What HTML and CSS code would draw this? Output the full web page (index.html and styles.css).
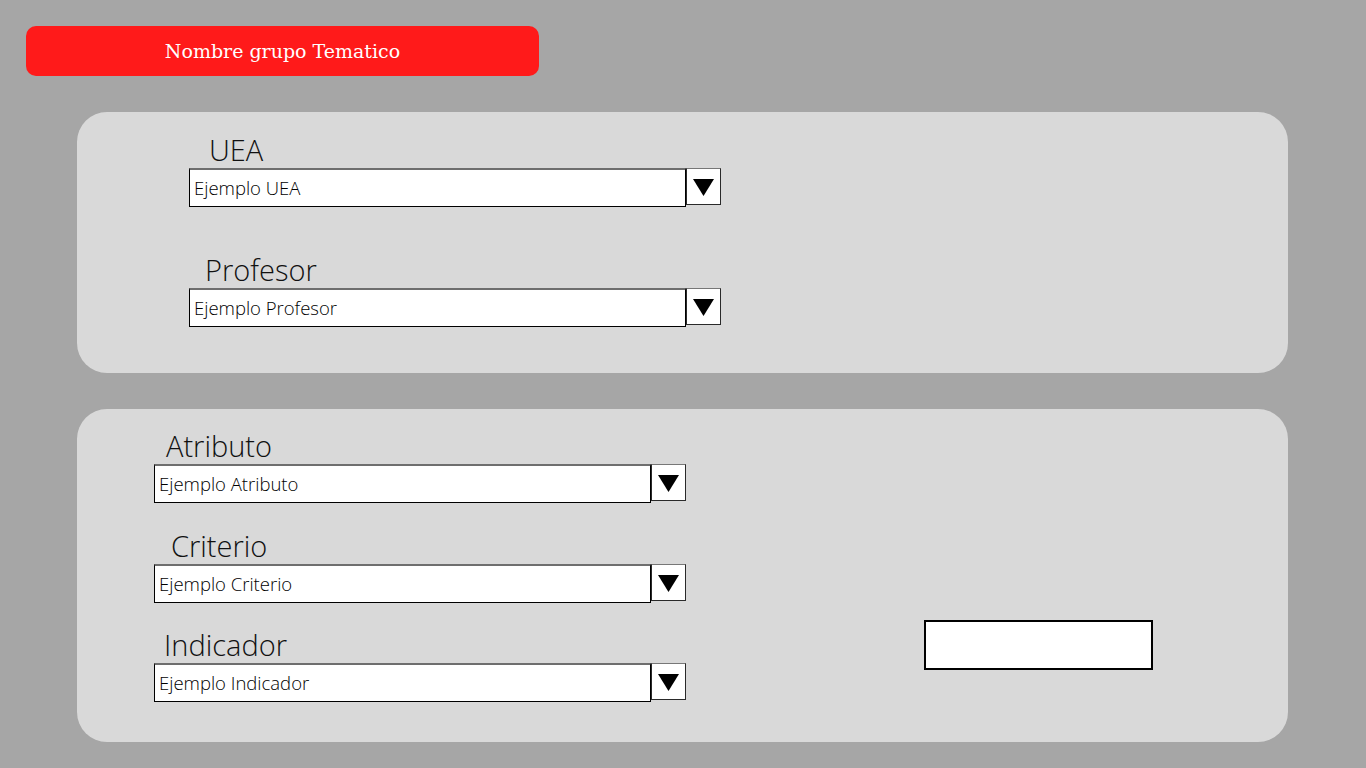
FILE: index.html
```html
<!DOCTYPE html>
<html lang="es">
<head>
<meta charset="utf-8">
<title>Nombre grupo Tematico</title>
<link rel="stylesheet" href="styles.css">
</head>
<body>
<div class="page">
  <div class="header">Nombre grupo Tematico</div>

  <section class="panel panel-top">
    <div class="fields">
      <div class="field">
        <div class="label ind-20">UEA</div>
        <div class="row">
          <div class="input">Ejemplo UEA</div>
          <div class="drop"><svg width="21" height="17" viewBox="0 0 21 17"><polygon points="0,0 21,0 10.5,17" fill="#000"/></svg></div>
        </div>
      </div>
      <div class="field gap-49">
        <div class="label ind-16">Profesor</div>
        <div class="row">
          <div class="input">Ejemplo Profesor</div>
          <div class="drop"><svg width="21" height="17" viewBox="0 0 21 17"><polygon points="0,0 21,0 10.5,17" fill="#000"/></svg></div>
        </div>
      </div>
    </div>
  </section>

  <section class="panel panel-bottom">
    <div class="fields">
      <div class="field">
        <div class="label ind-12">Atributo</div>
        <div class="row">
          <div class="input">Ejemplo Atributo</div>
          <div class="drop"><svg width="21" height="17" viewBox="0 0 21 17"><polygon points="0,0 21,0 10.5,17" fill="#000"/></svg></div>
        </div>
      </div>
      <div class="field gap-29">
        <div class="label ind-17">Criterio</div>
        <div class="row">
          <div class="input">Ejemplo Criterio</div>
          <div class="drop"><svg width="21" height="17" viewBox="0 0 21 17"><polygon points="0,0 21,0 10.5,17" fill="#000"/></svg></div>
        </div>
      </div>
      <div class="field gap-28">
        <div class="label ind-10">Indicador</div>
        <div class="row">
          <div class="input">Ejemplo Indicador</div>
          <div class="drop"><svg width="21" height="17" viewBox="0 0 21 17"><polygon points="0,0 21,0 10.5,17" fill="#000"/></svg></div>
        </div>
      </div>
    </div>
    <div class="result-box"></div>
  </section>
</div>
</body>
</html>
```

FILE: styles.css
```css
html, body {
  margin: 0;
  padding: 0;
}
body {
  background: #a6a6a6;
  width: 1366px;
  height: 768px;
  overflow: hidden;
  font-family: "Open Sans", "Liberation Sans", sans-serif;
  color: #111;
}
.page {
  padding: 26px 0 0 26px;
}
.header {
  width: 513px;
  height: 50px;
  box-sizing: border-box;
  background: #ff1a1a;
  border-radius: 10px;
  color: #fff;
  font-family: "DejaVu Serif", "Liberation Serif", serif;
  font-size: 19px;
  line-height: 50px;
  text-align: center;
}
.panel {
  margin-left: 51px;
  width: 1211px;
  box-sizing: border-box;
  background: #d9d9d9;
  border-radius: 30px;
  margin-top: 36px;
  display: flex;
  align-items: flex-start;
}
.panel-top {
  height: 261px;
  padding: 24px 0 0 112px;
}
.panel-bottom {
  height: 333px;
  padding: 23px 0 0 77px;
}
.fields {
  display: flex;
  flex-direction: column;
}
.field {
  display: flex;
  flex-direction: column;
}
.gap-49 { margin-top: 49px; }
.gap-29 { margin-top: 29px; }
.gap-28 { margin-top: 28px; }
.label {
  font-size: 29px;
  font-weight: 300;
  line-height: 28px;
  height: 30px;
  margin-bottom: 2px;
  color: #111;
  white-space: nowrap;
}
.ind-20 { padding-left: 20px; }
.ind-16 { padding-left: 16px; }
.ind-12 { padding-left: 12px; }
.ind-17 { padding-left: 17px; }
.ind-10 { padding-left: 10px; }
.row {
  display: flex;
  align-items: flex-start;
}
.input {
  width: 497px;
  height: 39px;
  box-sizing: border-box;
  background: #fff;
  border: 1px solid #000;
  border-top: 2px solid #6e6e6e;
  padding: 0 0 0 4px;
  font-size: 18.5px;
  font-weight: 300;
  line-height: 36px;
  color: #000;
  white-space: nowrap;
}
.drop {
  width: 35px;
  height: 37px;
  box-sizing: border-box;
  background: #fff;
  border: 1px solid #2a2a2a;
  border-top-color: #777;
  display: flex;
  justify-content: center;
  padding-top: 10px;
}
.drop svg {
  display: block;
}
.result-box {
  width: 229px;
  height: 50px;
  box-sizing: border-box;
  background: #fff;
  border: 2px solid #000;
  margin-left: 238px;
  margin-top: 188px;
}
```
